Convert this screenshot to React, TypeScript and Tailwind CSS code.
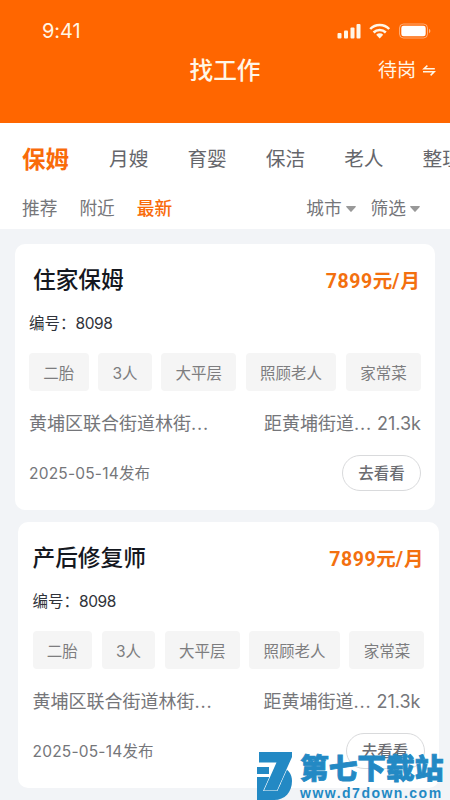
import React from "react";

interface Job {
  title: string;
  price: string;
  code: string;
  tags: string[];
  address: string;
  distance: string;
  date: string;
}

interface JobCardProps {
  job: Job;
  className: string;
  titleClassName?: string;
  distanceClassName?: string;
}

const categories = ["月嫂", "育婴", "保洁", "老人", "整理"];

const baseJob = {
  price: "7899",
  code: "8098",
  tags: ["二胎", "3人", "大平层", "照顾老人", "家常菜"],
  address: "黄埔区联合街道林街",
  distance: "距黄埔街道",
  date: "2025-05-14",
};

const jobs: Job[] = [
  { ...baseJob, title: "住家保姆" },
  { ...baseJob, title: "产后修复师" },
];

const StatusIcons = () => (
  <svg width="96" height="18" viewBox="0 0 96 18" fill="#fff6e6">
    <rect x="0.5" y="11" width="4" height="5.5" rx="1" />
    <rect x="7" y="8.5" width="4" height="8" rx="1" />
    <rect x="13.5" y="5.5" width="4" height="11" rx="1" />
    <rect x="19.5" y="2" width="4" height="14.5" rx="1" />
    <g fill="none" stroke="#fff6e6" strokeWidth="2.5">
      <path d="M33.2 7a13.2 13.2 0 0 1 19 0" />
      <path d="M36.6 10.5a8.6 8.6 0 0 1 12.2 0" />
    </g>
    <path d="M39.2 12.8a5 5 0 0 1 7 0L42.7 16.4z" />
    <rect x="62.5" y="2" width="28" height="14" rx="4" fill="none" stroke="#fff" strokeOpacity="0.45" />
    <rect x="64.3" y="3.7" width="24.4" height="10.6" rx="2.3" fill="#fff" />
    <path d="M92 6.8v4.400c1.900-.8 1.900-3.600 0-4.400z" fillOpacity="0.55" />
  </svg>
);

const SwapIcon = () => (
  <svg width="14" height="12" viewBox="0 0 14 12" fill="none" stroke="#fff6e6" strokeWidth="1.5">
    <path d="M12.8 3.8H2L5.400 0.600" />
    <path d="M1 6.800h11.200L8.600 10.400" />
  </svg>
);

const Caret = () => (
  <svg width="10" height="6" viewBox="0 0 10 6" fill="#999999">
    <path d="M0.8 0h8.4c.7 0 .9.6.5 1L5.6 5.6a.8.8 0 0 1-1.2 0L.3 1C-.1.6.1 0 .8 0z" />
  </svg>
);

const JobCard: React.FC<JobCardProps> = ({
  job,
  className,
  titleClassName = "",
  distanceClassName = "",
}) => {
  return (
    <div className={`h-[266px] rounded-[10px] bg-white pt-[20px] ${className}`}>
      <div className="flex h-8 items-center justify-between">
        <h3 className={`text-[22.7px] font-medium text-[#15181f] ${titleClassName}`}>{job.title}</h3>
        <p className="relative top-[2px] pr-px font-[Roboto,'Noto_Sans_CJK_SC',sans-serif] text-[19.5px] font-bold text-[#f3700f]">
          <span className="tracking-[0.6px]">{job.price}</span>元
          <span className="tracking-[0.9px]">/</span>月
        </p>
      </div>
      <p className="mt-4 text-[15.5px] leading-6 text-[#30333a]">
        编号：<span className="tracking-[-0.4px]">{job.code}</span>
      </p>
      <div className="mt-[17px] flex justify-between">
        {job.tags.map((tag) => (
          <span
            key={tag}
            className="flex h-[38px] items-center rounded bg-[#f5f5f5] px-[14.3px] pt-[3px] text-[15.5px] text-[#7d7d7f]"
          >
            {tag}
          </span>
        ))}
      </div>
      <div className="mt-[21px] flex justify-between text-[18px] leading-6 text-[#75767a]">
        <span>
          {job.address}
          <span className="tracking-[0.8px]">...</span>
        </span>
        <span className={distanceClassName}>
          {job.distance}
          <span className="tracking-[0.8px]">...</span> 21.3k
        </span>
      </div>
      <div className="mt-[19px] flex h-9 items-center justify-between">
        <span className="pt-[2px] text-[15.5px] text-[#75767a]">
          <span className="tracking-[0.2px]">{job.date}</span>发布
        </span>
        <button className="h-9 w-[79px] rounded-full border border-[#d9dadc] pt-[2px] text-[15.5px] font-medium text-[#6c6d72]">
          去看看
        </button>
      </div>
    </div>
  );
};

const Watermark = () => (
  <div className="absolute left-[257px] top-[751px] flex text-[#2389c4]">
    <svg width="36" height="49" viewBox="0 0 36 49" fill="currentColor">
      <path d="M0 16h12v7H0z" />
      <path d="M0 26h12v23H0z" />
      <path d="M23 16c8 1 12 7 12 14 0 11-7 19-18 19H0V39h14c7 0 10-4 10-10z" />
      <path
        d="M2 1h33v5L20 39.500H7L19.500 11.500H2z"
        stroke="white"
        strokeWidth="1.2"
        paintOrder="stroke"
      />
    </svg>
    <div className="ml-[7px] flex flex-col whitespace-nowrap">
      <span className="h-[35px] text-[28.7px] font-black leading-[35px] [-webkit-text-stroke:0.8px_currentColor]">
        第七下载站
      </span>
      <span className="h-[14px] font-['Liberation_Sans',sans-serif] text-[14px] font-bold leading-[14px] tracking-[1.5px]">
        www.d7down.com
      </span>
    </div>
  </div>
);

export default function App() {
  return (
    <div className="relative h-[800px] w-[450px] overflow-hidden bg-[#f2f4f7] font-[Inter,'Noto_Sans_CJK_SC',sans-serif]">
      <header className="h-[123px] bg-[#ff6600] pt-[20px] text-[#fff6e6]">
        <div className="flex h-[22px] items-center justify-between pl-[42px] pr-[17px]">
          <span className="text-[20px] tracking-[-0.1px]">9:41</span>
          <StatusIcons />
        </div>
        <div className="mt-[11px] grid h-8 grid-cols-[1fr_auto_1fr] items-center">
          <h1 className="col-start-2 text-[23.7px] font-medium">找工作</h1>
          <div className="flex items-center justify-end gap-[6px] pr-[14px] text-[19px]">
            待岗
            <SwapIcon />
          </div>
        </div>
      </header>

      <div className="h-[106px] overflow-hidden bg-white pt-[21px]">
        <nav className="flex h-8 items-center gap-[39px] whitespace-nowrap pl-[22px] text-[19.7px] text-[#65666b]">
          <span className="mr-px text-[23.5px] font-bold text-[#f96b0a]">保姆</span>
          {categories.map((category) => (
            <span key={category}>{category}</span>
          ))}
        </nav>
        <div className="mt-5 flex h-[26px] items-center justify-between pl-[22px] pr-[30px] text-[17.7px] text-[#75767a]">
          <div className="flex gap-[22px]">
            <span>推荐</span>
            <span>附近</span>
            <span className="font-medium text-[#f96b0a]">最新</span>
          </div>
          <div className="flex gap-[15px]">
            <span className="flex items-center gap-1">
              城市
              <Caret />
            </span>
            <span className="flex items-center gap-1">
              筛选
              <Caret />
            </span>
          </div>
        </div>
      </div>

      <main className="flex flex-col gap-3 pt-[15px]">
        <JobCard job={jobs[0]} className="ml-[15px] w-[420px] px-[14px]" titleClassName="pl-1" />
        <JobCard
          job={jobs[1]}
          className="ml-[18px] w-[421px] px-[14.5px]"
          distanceClassName="pr-[4px]"
        />
      </main>

      <Watermark />
    </div>
  );
}
